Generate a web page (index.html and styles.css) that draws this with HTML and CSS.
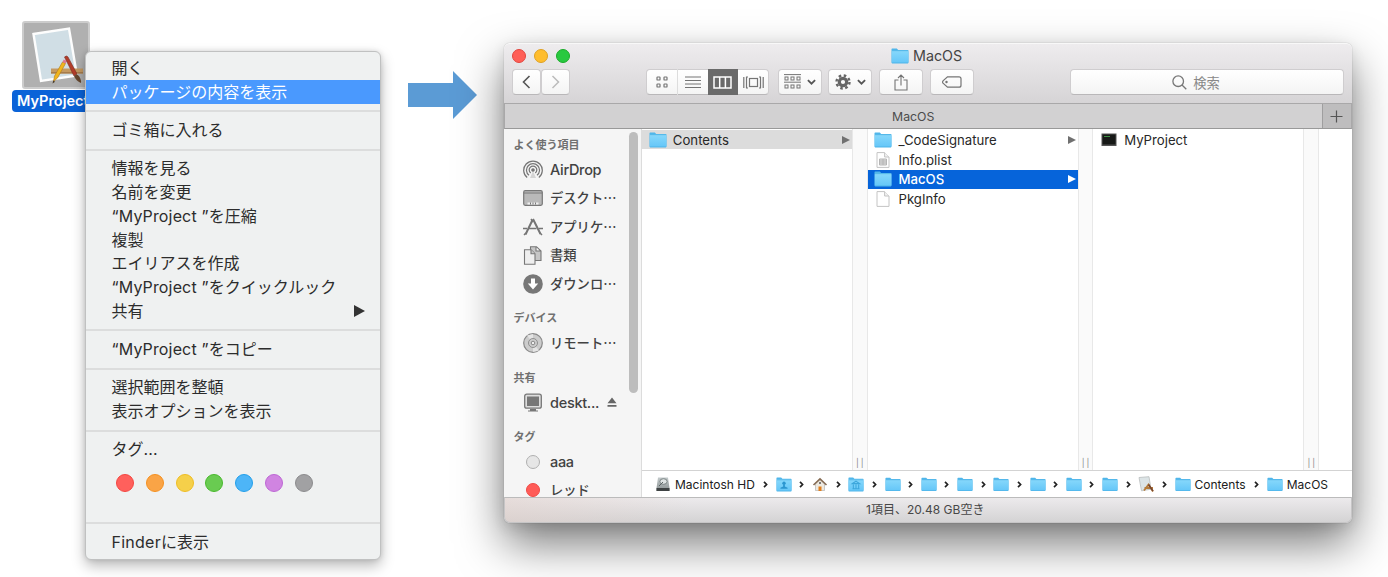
FILE: index.html
```
<!DOCTYPE html>
<html lang="ja">
<head>
<meta charset="utf-8">
<title>Finder</title>
<link rel="stylesheet" href="styles.css">
</head>
<body>
<svg class="defs" aria-hidden="true">
  <defs>
    <linearGradient id="fg" x1="0" y1="0" x2="0" y2="1"><stop offset="0" stop-color="#83d6fb"/><stop offset="1" stop-color="#66c7f8"/></linearGradient>
    <linearGradient id="hdg" x1="0" y1="0" x2="0" y2="1"><stop offset="0" stop-color="#c3cacb"/><stop offset="1" stop-color="#8b9293"/></linearGradient>
    <symbol id="folder" viewBox="0 0 18 16">
      <path d="M0.5 1.2q0-.7.7-.7h4.6l1.4 1.4h9.6q.7 0 .7.7v12q0 .8-.7.8H1.2q-.7 0-.7-.8z" fill="#50b6ea"/>
      <path d="M.8 4h16.6v10.4H.8z" fill="url(#fg)"/><path d="M.8 3.4h16.6" stroke="#93dcfb" stroke-width=".8"/>
    </symbol>
    <symbol id="doc" viewBox="0 0 14 16">
      <path d="M1 .6h7.6L13 5v10.4H1z" fill="#fff" stroke="#c4c4c4"/><path d="M8.6.6V5H13" fill="#f1f1f1" stroke="#c4c4c4"/>
    </symbol>
    <symbol id="tri" viewBox="0 0 8 8"><path d="M0 0l8 4-8 4z" fill="currentColor"/></symbol>
    <symbol id="chev" viewBox="0 0 5 7"><path d="M1 .8l2.6 2.7L1 6.2" fill="none" stroke="#222" stroke-width="1.7"/></symbol>
    <symbol id="down" viewBox="0 0 8 5"><path d="M.8.8L4 4 7.200.8" fill="none" stroke="#555" stroke-width="1.6"/></symbol>
    <symbol id="app" viewBox="0 0 66 66">
      <path d="M10.500 12L46 6.500l8 47L18 59z" fill="#d0dee5" stroke="#fdfdfd" stroke-width="2.400"/>
      <path d="M28 46.500h32v5H28z" fill="#c49a62"/><path d="M28 50h32v1.500H28z" fill="#a77c4c"/>
      <path d="M39.500 40l3 1.500-8 14.500-4 3.500 1-5.500z" fill="#f1b41d" stroke="#ad7917" stroke-width=".6"/>
      <path d="M39.500 40l1.200-2.500 3 1.600-1.200 2.400z" fill="#de7892"/><path d="M30.200 58.500l-.7 3 2.600-1.700z" fill="#4a3a26"/>
      <path d="M41.500 35q2-2 3.500 0l9 17-3 2z" fill="#b33d29" stroke="#7a2a22" stroke-width=".6"/>
      <path d="M51 54l3-2q4.500 4 4 9-5-2-7-7z" fill="#65472f"/>
    </symbol>
    <symbol id="cells" viewBox="0 0 17 16">
      <path d="M0 .6h17M0 8.200h17" stroke="#747474" stroke-width="1"/>
      <g fill="none" stroke="#747474"><rect x="1" y="3" width="3" height="3"/><rect x="7" y="3" width="3" height="3"/><rect x="13" y="3" width="3" height="3"/><rect x="1" y="11" width="3" height="3"/><rect x="7" y="11" width="3" height="3"/><rect x="13" y="11" width="3" height="3"/></g>
    </symbol>
  </defs>
</svg>

<div class="desk-file">
  <div class="thumb"><svg width="66" height="66"><use href="#app"/></svg></div>
  <div class="thumb-label">MyProject</div>
</div>

<nav class="menu">
  <div class="mi">開く</div>
  <div class="mi on">パッケージの内容を表示</div>
  <div class="sep"></div>
  <div class="mi">ゴミ箱に入れる</div>
  <div class="sep"></div>
  <div class="mi">情報を見る</div>
  <div class="mi">名前を変更</div>
  <div class="mi"><span class="lat">“MyProject ”</span>を圧縮</div>
  <div class="mi">複製</div>
  <div class="mi">エイリアスを作成</div>
  <div class="mi"><span class="lat">“MyProject ”</span>をクイックルック</div>
  <div class="mi">共有<svg class="sub" width="11" height="12" preserveAspectRatio="none" viewBox="0 0 10 10"><path d="M0 0l10 5-10 5z" fill="#333"/></svg></div>
  <div class="sep"></div>
  <div class="mi"><span class="lat">“MyProject ”</span>をコピー</div>
  <div class="sep"></div>
  <div class="mi">選択範囲を整頓</div>
  <div class="mi">表示オプションを表示</div>
  <div class="sep"></div>
  <div class="mi">タグ<span class="lat">...</span></div>
  <div class="tags"><i class="c red"></i><i class="c orange"></i><i class="c yellow"></i><i class="c green"></i><i class="c blue"></i><i class="c purple"></i><i class="c gray"></i></div>
  <div class="sep"></div>
  <div class="mi"><span class="fin">Finder</span>に表示</div>
</nav>

<svg class="arrow" width="69" height="48" viewBox="0 0 69 48"><path d="M0 12h45V0l24 24-24 24V36H0z" fill="#5b9bd5"/></svg>

<main class="window">
  <header class="head">
    <div class="titlebar">
      <div class="lights"><i class="l1"></i><i class="l2"></i><i class="l3"></i></div>
      <div class="title"><svg width="18" height="16"><use href="#folder"/></svg><span>MacOS</span></div>
    </div>
    <div class="toolbar">
      <div class="btn nav"><svg width="9" height="14" viewBox="0 0 9 14"><path d="M7.500 1L1.500 7l6 6" fill="none" stroke="#555" stroke-width="1.600"/></svg></div>
      <div class="btn nav nav2"><svg width="9" height="14" viewBox="0 0 9 14"><path d="M1.500 1l6 6-6 6" fill="none" stroke="#bbb" stroke-width="1.500"/></svg></div>
      <div class="btn views">
        <div class="v"><svg width="12" height="12" viewBox="0 0 12 12" fill="none" stroke="#747474" stroke-width="1.200"><rect x="1" y="1" width="3" height="3" rx=".6"/><rect x="8" y="1" width="3" height="3" rx=".6"/><rect x="1" y="8" width="3" height="3" rx=".6"/><rect x="8" y="8" width="3" height="3" rx=".6"/></svg></div>
        <div class="v line"><svg width="16" height="13" viewBox="0 0 16 13"><path d="M0 1h16M0 4.500h16M0 8h16M0 11.500h16" stroke="#747474"/></svg></div>
        <div class="v sel"><svg width="19" height="13" viewBox="0 0 19 13"><path d="M1 1h17v11H1zM6.700 1v11M12.400 1v11" fill="none" stroke="#fff" stroke-width="1.500"/></svg></div>
        <div class="v"><svg width="21" height="13" viewBox="0 0 21 13" fill="none" stroke="#747474" stroke-width="1.200"><path d="M.8 1v11M3.500.8v11.400M3 1h2M3 12h2M20.200 1v11M17.500.8v11.400M16 1h2M16 12h2"/><rect x="6.500" y="2.500" width="8" height="8"/></svg></div>
      </div>
      <div class="btn drop"><svg width="17" height="16"><use href="#cells"/></svg><svg width="9" height="6"><use href="#down"/></svg></div>
      <div class="btn drop d2"><svg width="16" height="16" viewBox="-8 -8 16 16"><circle r="6.500" fill="none" stroke="#666" stroke-width="2.400" stroke-dasharray="2.550 2.550"/><circle r="3.700" fill="none" stroke="#666" stroke-width="3.200"/></svg><svg width="9" height="6"><use href="#down"/></svg></div>
      <div class="btn one"><svg width="14" height="17" viewBox="0 0 14 17" fill="none" stroke="#747474" stroke-width="1.100"><path d="M4.500 6H1v10h12V6H9.500M7 11.500V1M4 4l3-3 3 3"/></svg></div>
      <div class="btn one"><svg width="20" height="12" viewBox="0 0 20 12" fill="none" stroke="#747474" stroke-width="1.200"><path d="M5.500.8H17q2 0 2 2v6.400q0 2-2 2H5.500L1 7.200Q.2 6 1 4.800z"/><circle cx="4.500" cy="6" r=".6"/></svg></div>
      <div class="btn search"><svg width="15" height="15" viewBox="0 0 15 15" fill="none" stroke="#777" stroke-width="1.300"><circle cx="6.200" cy="6.200" r="5.300"/><path d="M10 10l4.300 4.300"/></svg><span>検索</span></div>
    </div>
  </header>
  <div class="tabs"><div class="tab">MacOS</div><div class="plus"><svg width="13" height="13" viewBox="0 0 13 13"><path d="M6.500.5v12M.5 6.500h12" stroke="#555" stroke-width="1.200"/></svg></div></div>

  <div class="body">
    <aside class="side">
      <div class="places">
        <h2 class="first">よく使う項目</h2>
        <div class="p"><svg width="20" height="20" viewBox="0 0 20 20" fill="none" stroke="#757575" stroke-width="1.250"><path d="M4.200 17.600a9.300 9.300 0 1 1 11.600 0M6 15.300a6.500 6.500 0 1 1 8 0M7.700 12.900a3.800 3.800 0 1 1 4.600 0"/><circle cx="10" cy="10" r="1.200" fill="#757575"/><path d="M10 11l-3 7h6z" fill="#999" stroke="none" opacity=".35"/></svg><span class="la">AirDrop</span></div>
        <div class="p"><svg width="20" height="16" viewBox="0 0 20 16"><rect x=".7" y=".7" width="18.600" height="14.600" rx="1.500" fill="#b9b9b9" stroke="#777" stroke-width="1.200"/><path d="M1 3h18" stroke="#777"/><path d="M4.500 12.500h11v2h-11z" fill="#eee"/><path d="M7.500 12.500v2M10 12.500v2M12.500 12.500v2" stroke="#777"/></svg><span>デスクト…</span></div>
        <div class="p"><svg width="20" height="18" viewBox="0 0 20 18" fill="none" stroke="#757575"><path d="M9.500 2L2.500 16.500M10 1l7.500 15" stroke-width="2"/><path d="M0 10.500h4M6 10.500h7.500M16 10.500h4M1 17l2-2M19 17l-2-2M8 1l2 3" stroke-width="1.500"/></svg><span>アプリケ…</span></div>
        <div class="p"><svg width="20" height="19" viewBox="0 0 20 19" fill="#c6c6c6" stroke="#777" stroke-width="1.100"><path d="M7.500.7h6L18 5v9.500H7.500zM13 .7V5h5"/><path d="M1.500 3.700h6.500l4 4v10.500H1.500z" fill="#eee"/><path d="M8 3.700v4h4"/></svg><span>書類</span></div>
        <div class="p"><svg width="20" height="20" viewBox="0 0 20 20"><circle cx="10" cy="10" r="9.800" fill="#777"/><path d="M8 4.500h4v5h3.200L10 15.500 4.800 9.500H8z" fill="#fff"/></svg><span>ダウンロ…</span></div>
        <h2>デバイス</h2>
        <div class="p"><svg width="20" height="20" viewBox="0 0 20 20" fill="#ccc" stroke="#888"><circle cx="10" cy="10" r="9.300" stroke-width="1.200"/><path d="M10 10L4 2.500 10 1zM10 10l6 7.500-6 1.500z" fill="#e4e4e4" stroke="none"/><circle cx="10" cy="10" r="4.500" stroke-width=".9"/><circle cx="10" cy="10" r="1.800" fill="#eee"/></svg><span>リモート…</span></div>
        <h2>共有</h2>
        <div class="p"><svg width="20" height="19" viewBox="0 0 20 19"><rect x="1.700" y="1.200" width="16.600" height="14" rx="2" fill="#ddd" stroke="#777" stroke-width="1.300"/><rect x="4" y="3.500" width="12" height="9.500" fill="#777"/><path d="M7 16h6v1.500h2v1H5v-1h2z" fill="#777"/></svg><span class="la desk">deskt...</span><svg class="eject" width="10" height="11" viewBox="0 0 10 11"><path d="M5 .5l4.500 5.700H.5zM.5 8h9v1.800h-9z" fill="#666"/></svg></div>
        <h2>タグ</h2>
        <div class="p"><i class="dot"></i><span class="la">aaa</span></div>
        <div class="p last"><i class="dot r"></i><span>レッド</span></div>
      </div>
      <div class="track"><div class="bar"></div></div>
    </aside>
    <section class="browser">
      <div class="cols">
        <div class="col"><div class="row g"><svg width="18" height="16"><use href="#folder"/></svg><span>Contents</span><svg class="t" width="8" height="8"><use href="#tri"/></svg></div></div>
        <div class="gut">||</div>
        <div class="col">
          <div class="row"><svg width="18" height="16"><use href="#folder"/></svg><span>_CodeSignature</span><svg class="t" width="8" height="8"><use href="#tri"/></svg></div>
          <div class="row"><svg width="18" height="16" viewBox="-2 0 18 16"><use href="#doc" width="14" height="16"/><path d="M3.500 7h7v6h-7zM3.500 9h7M3.500 11h7M7 7v6" fill="#ddd" stroke="#b5b5b5"/></svg><span>Info.plist</span></div>
          <div class="row b"><svg width="18" height="16"><use href="#folder"/></svg><span>MacOS</span><svg class="t" width="8" height="8"><use href="#tri"/></svg></div>
          <div class="row"><svg width="18" height="16" viewBox="-2 0 18 16"><use href="#doc" width="14" height="16"/></svg><span>PkgInfo</span></div>
        </div>
        <div class="gut">||</div>
        <div class="col"><div class="row"><svg width="18" height="16" viewBox="0 0 18 16"><rect x="1.500" y="1.500" width="15" height="12.500" fill="#555"/><path d="M2.500 2.500h13v10h-13z" fill="#171917"/><path d="M4 4.500h6" stroke="#3c8e43"/></svg><span>MyProject</span></div></div>
        <div class="gut">||</div>
      </div>
      <div class="path">
        <svg width="16" height="15" viewBox="0 0 16 15"><path d="M3 .5h10l1.500 10.500v3h-13v-3z" fill="url(#hdg)"/><path d="M1.500 11h13v3h-13z" fill="#3e4243"/><ellipse cx="8.500" cy="4.500" rx="3.600" ry="2.800" fill="#dfe4e4" stroke="#6b7374" stroke-width=".8"/><path d="M4 9l4-4" stroke="#5c6465"/></svg><span class="hd">Macintosh HD</span>
        <b><svg width="5" height="7"><use href="#chev"/></svg></b><svg width="16" height="15" viewBox="0 0 18 16" preserveAspectRatio="none"><use href="#folder" width="18" height="16"/><circle cx="9" cy="6.700" r="1.900" fill="#2b96d0"/><path d="M5 12.500h8v-1L10 10V8H8v2l-3 1.500z" fill="#2b96d0"/></svg>
        <b><svg width="5" height="7"><use href="#chev"/></svg></b><svg width="16" height="15" viewBox="0 0 16 15"><path d="M3.500 7L8 2.500 12.500 7v6.500h-9z" fill="#eee9df" stroke="#aaa" stroke-width=".6"/><path d="M1.500 8L8 1.800 14.500 8" fill="none" stroke="#856b53" stroke-width="1.600"/><path d="M6.500 9.500h3V14h-3z" fill="#e27e1b"/><circle cx="8" cy="6" r="1" fill="#555"/></svg>
        <b><svg width="5" height="7"><use href="#chev"/></svg></b><svg width="16" height="15" viewBox="0 0 18 16" preserveAspectRatio="none"><use href="#folder" width="18" height="16"/><path d="M5 7l4-2.500L13 7zM6 8v4M9 8v4M12 8v4M5 12.500h8" stroke="#3da7dc" stroke-width="1.200" fill="none"/></svg>
        <b><svg width="5" height="7"><use href="#chev"/></svg></b><svg width="16" height="15"><use href="#folder"/></svg>
        <b><svg width="5" height="7"><use href="#chev"/></svg></b><svg width="16" height="15"><use href="#folder"/></svg>
        <b><svg width="5" height="7"><use href="#chev"/></svg></b><svg width="16" height="15"><use href="#folder"/></svg>
        <b><svg width="5" height="7"><use href="#chev"/></svg></b><svg width="16" height="15"><use href="#folder"/></svg>
        <b><svg width="5" height="7"><use href="#chev"/></svg></b><svg width="16" height="15"><use href="#folder"/></svg>
        <b><svg width="5" height="7"><use href="#chev"/></svg></b><svg width="16" height="15"><use href="#folder"/></svg>
        <b><svg width="5" height="7"><use href="#chev"/></svg></b><svg width="16" height="15"><use href="#folder"/></svg>
        <b><svg width="5" height="7"><use href="#chev"/></svg></b><svg width="16" height="16" viewBox="0 0 16 16"><path d="M1 1.500L11 .7l2 12.500-9.500 1.600z" fill="#dce4e6" stroke="#b9bcbc" stroke-width=".8"/><path d="M6 14.500l4.500-6 4.500 7M6.500 12h8.500" fill="none" stroke="#b67b39" stroke-width="1.800"/><path d="M10.500 8.500l4.500 6.500" stroke="#754631" stroke-width="1.500"/></svg>
        <b><svg width="5" height="7"><use href="#chev"/></svg></b><svg width="16" height="15"><use href="#folder"/></svg><span class="pc">Contents</span>
        <b><svg width="5" height="7"><use href="#chev"/></svg></b><svg width="16" height="15"><use href="#folder"/></svg><span>MacOS</span>
      </div>
    </section>
  </div>
  <footer class="status">1項目、20.48 GB空き</footer>
</main>
</body>
</html>
```
FILE: styles.css
```
* { box-sizing: border-box; }
body {
  margin: 0; width: 1388px; height: 577px; overflow: hidden; position: relative;
  background: #fff; color: #2c2c2c;
  font-family: Inter, "Noto Sans CJK JP", sans-serif;
}
svg { display: block; flex: none; }
i, b { display: block; flex: none; }
.defs { position: absolute; width: 0; height: 0; }

.desk-file { position: absolute; left: 12px; top: 21px; width: 88px; }
.thumb { width: 68px; height: 68px; margin-left: 10px; background: #b0b0b0; border: 2px solid #ccc; border-radius: 3px; }
.thumb svg { margin: -1px; }
.thumb-label {
  height: 22px; margin-top: 1px; padding-left: 5px; background: #0a63d8; color: #fff;
  border-radius: 4px; font-weight: 600; font-size: 14.5px; line-height: 22px; white-space: nowrap;
}

.menu {
  position: absolute; left: 85px; top: 51px; width: 296px; height: 509px; padding-top: 4.7px;
  background: #eff1f1; border: 1px solid #c0c1c1; border-radius: 6px;
  box-shadow: 0 6px 14px rgba(0,0,0,.27), 0 0 5px rgba(0,0,0,.12);
}
.mi {
  height: 23.7px; padding-left: 25.5px; display: flex; align-items: center;
  font-size: 16px; line-height: 23px; white-space: pre;
}
.mi.on { background: #4a99fe; color: #fff; }
.lat { letter-spacing: .15px; }
.fin { letter-spacing: .25px; }
.sub { margin-left: auto; margin-right: 15px; }
.sep { height: 14.7px; padding-top: 6.3px; }
.sep::after { content: ""; display: block; height: 2px; background: #dcdddd; }
.tags { height: 54.3px; display: flex; gap: 11.8px; padding: 12.5px 0 0 30px; }
.c { width: 18px; height: 18px; border-radius: 50%; border: 1px solid; }
.red { background: #ff605c; border-color: #f44640; }
.orange { background: #faa446; border-color: #f5901f; }
.yellow { background: #f5d04a; border-color: #efbd22; }
.green { background: #69cb51; border-color: #48b92c; }
.blue { background: #4db5f7; border-color: #229fea; }
.purple { background: #d084e1; border-color: #bd67d4; }
.gray { background: #a1a1a3; border-color: #8b8b8d; }

.arrow { position: absolute; left: 408px; top: 71px; }

.window {
  position: absolute; left: 504px; top: 43px; width: 847.5px; height: 480px;
  display: flex; flex-direction: column; border-radius: 6px;
  box-shadow: 0 0 1px rgba(0,0,0,.45), 0 21px 46px rgba(0,0,0,.52), 0 4px 14px rgba(0,0,0,.1);
}
.head { height: 60px; background: linear-gradient(#eeecee, #d6d4d6); border-radius: 6px 6px 0 0; border-top: 1px solid #f8f8f8; }
.titlebar { height: 25px; padding-bottom: 2px; display: flex; align-items: center; }
.lights { display: flex; gap: 8px; padding-left: 8px; width: 387px; }
.lights i { width: 14px; height: 14px; border-radius: 50%; }
.l1 { background: #ff5f57; border: 1px solid #e2463f; }
.l2 { background: #ffbd2e; border: 1px solid #dfa123; }
.l3 { background: #28c940; border: 1px solid #1aab29; }
.title { display: flex; align-items: center; gap: 4px; font-size: 14.3px; color: #444; }
.toolbar { display: flex; padding-left: 8px; }
.btn {
  height: 26px; background: linear-gradient(#fff, #f4f4f4); border: 1px solid #cfcdcf; border-bottom-color: #b9b7b9;
  border-radius: 4px; display: flex; align-items: center; justify-content: center;
}
.nav { width: 28.5px; }
.nav2 { width: 29.5px; }
.views { width: 123px; margin-left: 76px; margin-right: 9px; }
.v { width: 30.5px; height: 26px; display: flex; align-items: center; justify-content: center; flex: none; }
.v.line { border-left: 1px solid #ddd; }
.v.sel { background: #6a6a6a; }
.drop { width: 44px; gap: 6px; margin-right: 6px; }
.d2 { margin-right: 7px; }
.one { width: 44px; margin-right: 7px; }
.search { width: 274px; margin-left: 89px; gap: 6px; padding-right: 22px; font-size: 13.3px; color: #888; }
.tabs { height: 26px; display: flex; background: #d2d1d2; border: 1px solid #a9a8a9; border-bottom-color: #999; }
.tab { flex: 1; display: flex; align-items: center; justify-content: center; font-size: 12.3px; color: #4c4c4c; }
.plus { width: 29px; background: #bebdbe; border-left: 1px solid #9f9e9f; display: flex; align-items: center; justify-content: center; }

.body { height: 368px; display: flex; overflow: hidden; }
.side { width: 138px; background: #f5f5f5; display: flex; border-right: 1px solid #dcdcdc; overflow: hidden; flex: none; }
.places { width: 125px; flex: none; }
.places h2 { margin: 0; height: 31px; padding: 10px 0 0 9.5px; line-height: 20px; font-size: 11px; font-weight: 600; color: #707070; }
.places h2.first { height: 26.5px; padding-top: 5.5px; }
.p { height: 28.5px; display: flex; align-items: center; gap: 7px; padding-left: 19px; font-family: "Noto Sans CJK JP", sans-serif; font-size: 13.3px; line-height: 18px; font-weight: 500; color: #424242; white-space: nowrap; }
.p.last { height: 27.5px; }
.la { font-family: Inter, sans-serif; font-size: 14.5px; font-weight: 500; letter-spacing: -.3px; }
.desk { width: 48px; }
.eject { margin-left: 2px; }
.dot { width: 14px; height: 14px; margin: 0 3px; border-radius: 50%; background: #e6e6e6; border: 1px solid #b0b0b0; }
.dot.r { background: #ff5b57; border-color: #ef4a46; }
.track { width: 9px; padding-top: 3px; }
.bar { height: 261px; background: #bdbdbd; border-radius: 5px; }

.browser { flex: 1; display: flex; flex-direction: column; background: #fff; }
.cols { height: 341px; display: flex; }
.col { width: 210px; padding-top: 1px; }
.gut { width: 15.7px; background: #fafafa; border: solid #e8e8e8; border-width: 0 1px; display: flex; align-items: flex-end; justify-content: center; padding: 0 0 2px 2px; font-size: 8.5px; letter-spacing: 2px; color: #888; }
.row { height: 19.8px; display: flex; align-items: center; padding: 0 0 0 6.5px; gap: 6.3px; font-size: 13.2px; color: #282828; font-weight: 400; }
.g { background: linear-gradient(#dcdcdc, #dcdcdc) 0 0 / 100% 19px no-repeat; }
.b { background: #0664da; color: #fff; font-weight: 500; }
.t { margin-left: auto; margin-right: 2px; color: #707070; }
.b .t { color: #fff; }
.path { height: 27px; border-top: 1px solid #d3d3d3; display: flex; align-items: center; padding-left: 13px; font-size: 12px; color: #202020; white-space: nowrap; }
.path b { width: 20.25px; display: flex; justify-content: center; }
.path span { margin-left: 4px; }
.hd { width: 80.5px; }
.pc { width: 52px; }
.status { height: 26px; padding-right: 5px; border: 1px solid #c6c5c6; border-top-color: #bbb; border-radius: 0 0 6px 6px; background: linear-gradient(90deg, rgba(226,208,202,.5), rgba(226,208,202,0) 22%), linear-gradient(#eceaec, #d4d3d4); text-align: center; font-size: 12px; line-height: 24px; color: #474747; }
```
